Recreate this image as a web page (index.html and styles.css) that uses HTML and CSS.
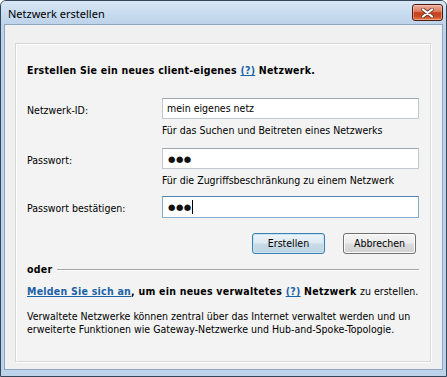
FILE: index.html
```html
<!DOCTYPE html>
<html lang="de">
<head>
<meta charset="utf-8">
<title>Netzwerk erstellen</title>
<link rel="stylesheet" href="styles.css">
</head>
<body>
<div class="window">
  <div class="titlebar">
    <span class="title">Netzwerk erstellen</span>
    <div class="close">
      <svg width="13" height="10" viewBox="0 0 13 10">
        <path d="M2 1.5 L11 8.5 M11 1.5 L2 8.5" stroke="#6b3a2e" stroke-width="3.6" stroke-linecap="round" fill="none"/>
        <path d="M2 1.5 L11 8.5 M11 1.5 L2 8.5" stroke="#ffffff" stroke-width="2.2" stroke-linecap="round" fill="none"/>
      </svg>
    </div>
  </div>
  <div class="client">
    <div class="panel">
      <div class="heading">Erstellen Sie ein neues client-eigenes <a class="link">(?)</a> Netzwerk.</div>

      <div class="form">
        <div class="label">Netzwerk-ID:</div>
        <div class="field">mein eigenes netz</div>
        <div class="hint">Für das Suchen und Beitreten eines Netzwerks</div>

        <div class="label row2">Passwort:</div>
        <div class="field row2"><span class="dots">●●●</span></div>
        <div class="hint">Für die Zugriffsbeschränkung zu einem Netzwerk</div>

        <div class="label row3">Passwort bestätigen:</div>
        <div class="field focused row3"><span class="dots">●●●</span><span class="caret"></span></div>
      </div>

      <div class="buttons">
        <div class="btn default">Erstellen</div>
        <div class="btn">Abbrechen</div>
      </div>

      <div class="oder"><span>oder</span><div class="rule"></div></div>

      <div class="login"><a class="link">Melden Sie sich an</a>, um ein neues verwaltetes <a class="link">(?)</a> Netzwerk <span class="normal">zu erstellen.</span></div>

      <div class="para">
        <div class="line">Verwaltete Netzwerke können zentral über das Internet verwaltet werden und un</div>
        <div class="line">erweiterte Funktionen wie Gateway-Netzwerke und Hub-and-Spoke-Topologie.</div>
      </div>
    </div>
  </div>
</div>
</body>
</html>
```

FILE: styles.css
```css
html, body {
  margin: 0;
  padding: 0;
  background: #ffffff;
}

body {
  width: 447px;
  height: 377px;
  overflow: hidden;
  font-family: "DejaVu Sans", sans-serif;
  font-stretch: condensed;
  font-size: 10.5px;
  line-height: 13px;
  color: #000;
}

.window {
  box-sizing: border-box;
  width: 447px;
  height: 377px;
  border: 1px solid #34475a;
  border-radius: 6px 6px 0 0;
  background: #bcd3ea;
  display: flex;
  flex-direction: column;
  overflow: hidden;
}

.titlebar {
  height: 23px;
  display: flex;
  align-items: flex-start;
  padding-left: 7px;
  background: linear-gradient(#d9e7f5 0%, #c9dcf0 50%, #bdd3ea 100%);
}

.title {
  font-family: "Noto Sans", "DejaVu Sans", sans-serif;
  font-stretch: normal;
  font-size: 11px;
  line-height: 16px;
  margin-top: 5px;
  color: #000;
}

.close {
  margin-left: auto;
  margin-top: 3px;
  margin-right: 3px;
  box-sizing: border-box;
  width: 31px;
  height: 17px;
  border: 1px solid #4e1a0e;
  border-radius: 3px;
  background: linear-gradient(#eab09d 0%, #dc7c60 42%, #c6401d 52%, #c94a25 75%, #e07a4c 100%);
  box-shadow: inset 0 0 0 1px rgba(255, 220, 200, 0.45);
  display: flex;
  align-items: center;
  justify-content: center;
}

.close svg {
  display: block;
}

.client {
  flex: 1;
  min-width: 0;
  margin: 0 3px 6px 3px;
  border: 1px solid #8ea6bf;
  background: #f0f0f0;
  padding: 18px 11px 7px 10px;
  display: flex;
}

.panel {
  flex: 1;
  min-width: 0;
  border: 1px solid #d7d7d7;
  box-shadow: inset 1px 1px 0 #ffffff, 1px 1px 0 #ffffff;
  background: #f3f3f3;
  padding: 20px 11px 0 11px;
  display: flex;
  flex-direction: column;
}

.heading {
  font-weight: bold;
  letter-spacing: 0.25px;
  height: 13px;
}

.link {
  color: #1b63a8;
  text-decoration: underline;
  font-weight: bold;
}

.form {
  display: grid;
  grid-template-columns: 135px 257px;
  margin-top: 21px;
}

.label {
  grid-column: 1;
  display: flex;
  align-items: center;
  padding-top: 3px;
}

.field {
  grid-column: 2;
  box-sizing: border-box;
  height: 21px;
  background: #ffffff;
  border: 1px solid #c3c8ce;
  border-top-color: #a0a6ae;
  padding: 0 4px;
  display: flex;
  align-items: center;
}

.field.focused {
  height: 22px;
  border: 1px solid #86abcc;
  border-top-color: #4f83b3;
}

.row2 {
  margin-top: 11px;
}

.row3 {
  margin-top: 9px;
}

.hint {
  grid-column: 2;
  margin-top: 5px;
}

.dots {
  font-family: "DejaVu Sans", sans-serif;
  font-stretch: normal;
  font-size: 8.5px;
  letter-spacing: 0.5px;
  line-height: 10px;
  padding-left: 1px;
  color: #111;
}

.caret {
  width: 1px;
  height: 14px;
  background: #000;
}

.buttons {
  display: flex;
  justify-content: flex-end;
  gap: 18px;
  padding-right: 3px;
  margin-top: 15px;
}

.btn {
  box-sizing: border-box;
  width: 73px;
  height: 21px;
  border: 1px solid #707070;
  border-radius: 3px;
  background: linear-gradient(#f4f4f4 0%, #ececec 48%, #dddddd 52%, #d0d0d0 100%);
  box-shadow: inset 0 0 0 1px #fcfcfc;
  display: flex;
  align-items: center;
  justify-content: center;
}

.btn.default {
  border-color: #3c7fb1;
  background: linear-gradient(#edf4f8 0%, #dde9f1 48%, #c9dbe7 52%, #bed3e2 100%);
  box-shadow: inset 0 0 0 1px #c5e5f8;
}

.oder {
  display: flex;
  align-items: center;
  margin-top: 9px;
  font-weight: bold;
  letter-spacing: 0.25px;
}

.rule {
  flex: 1;
  height: 1px;
  background: #a5a5a5;
  border-bottom: 1px solid #ffffff;
  margin-left: 5px;
  margin-top: 1px;
}

.login {
  margin-top: 9px;
  font-weight: bold;
  letter-spacing: 0.25px;
  white-space: nowrap;
}

.normal {
  font-weight: normal;
  letter-spacing: 0;
}

.para {
  margin-top: 12px;
  min-width: 0;
}

.line {
  white-space: nowrap;
  overflow: hidden;
}
```
